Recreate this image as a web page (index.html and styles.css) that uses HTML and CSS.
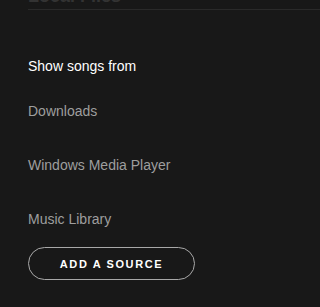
FILE: index.html
```html
<!DOCTYPE html>
<html>
<head>
<meta charset="utf-8">
<link rel="stylesheet" href="styles.css">
</head>
<body>
<div class="page">
  <div class="section-head"><span class="section-title">Local Files</span></div>
  <h2 class="label">Show songs from</h2>
  <ul class="sources">
    <li>Downloads</li>
    <li>Windows Media Player</li>
    <li>Music Library</li>
  </ul>
  <button class="add-btn">ADD A SOURCE</button>
</div>
</body>
</html>
```
FILE: styles.css
```css
html, body {
  margin: 0;
  padding: 0;
  background: #181818;
  font-family: "Liberation Sans", Arial, sans-serif;
}
.page {
  padding-left: 28px;
  overflow: hidden;
  height: 307px;
}
.section-head {
  margin-top: -14px;
  height: 23px;
  border-bottom: 1px solid #2a2a2a;
}
.section-title {
  display: block;
  font-size: 18px;
  font-weight: bold;
  color: #333;
  line-height: 20px;
}
.label {
  margin: 48px 0 0;
  font-size: 14px;
  font-weight: normal;
  color: #fff;
  line-height: 16px;
}
.sources {
  list-style: none;
  margin: 0;
  padding: 0;
}
.sources li {
  font-size: 14px;
  line-height: 16px;
  color: #9e9e9e;
  margin-top: 38px;
}
.sources li:first-child {
  margin-top: 29px;
}
.add-btn {
  display: flex;
  align-items: center;
  justify-content: center;
  margin-top: 20px;
  width: 167px;
  height: 33px;
  background: transparent;
  border: 1px solid #a8a8a8;
  border-radius: 17px;
  color: #fff;
  font-family: "Liberation Sans", Arial, sans-serif;
  font-size: 11px;
  font-weight: bold;
  letter-spacing: 1.6px;
  padding: 0;
}
```
